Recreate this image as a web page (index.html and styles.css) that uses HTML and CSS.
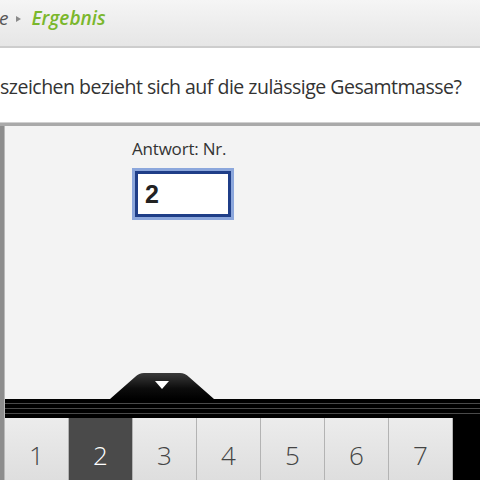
FILE: index.html
```html
<!doctype html>
<html>
  <head>
    <meta charset="UTF-8" />
    <title>Ergebnis</title>
    <link rel="stylesheet" href="styles.css">
  </head>
  <body>
    <div id="header">
      <span class="crumb">e</span>
      <span class="crumb-sep"></span>
      <span class="crumb-current">Ergebnis</span>
    </div>
    <div id="question">szeichen bezieht sich auf die zulässige Gesamtmasse?</div>
    <div id="main">
      <div class="side"></div>
      <div class="column">
        <div class="answer">
          <div class="label">Antwort: Nr.</div>
          <div class="input">2</div>
        </div>
        <div class="handle-row">
          <svg class="handle" width="104" height="26" viewBox="0 0 104 26">
            <defs>
              <linearGradient id="hg" x1="0" y1="0" x2="0" y2="1">
                <stop offset="0" stop-color="#3a3a3a" />
                <stop offset="0.6" stop-color="#0c0c0c" />
                <stop offset="1" stop-color="#000" />
              </linearGradient>
            </defs>
            <path d="M0 26 L25 4 Q29 0 34 0 L70 0 Q75 0 79 4 L104 26 Z" fill="url(#hg)" />
            <path d="M45 8 L59 8 L52 16 Z" fill="#fff" />
          </svg>
        </div>
        <div class="band"></div>
        <div id="tabs">
          <div class="tab">1</div>
          <div class="tab active">2</div>
          <div class="tab">3</div>
          <div class="tab">4</div>
          <div class="tab">5</div>
          <div class="tab">6</div>
          <div class="tab">7</div>
        </div>
      </div>
    </div>
  </body>
</html>
```

FILE: styles.css
```css
* {
  padding: 0px;
  margin: 0px;
  box-sizing: border-box;
}
html,
body {
  width: 480px;
  height: 480px;
  overflow: hidden;
}
body {
  font-family: "Open Sans", "Noto Sans", sans-serif;
  color: #333;
  display: flex;
  flex-direction: column;
  background: #f3f3f3;
}
#header {
  height: 48px;
  flex: none;
  background: linear-gradient(to bottom, #f5f5f5, #e6e6e6);
  border-bottom: 2px solid #cdcdcd;
  display: flex;
  align-items: center;
  padding-bottom: 10px;
  white-space: nowrap;
}
.crumb {
  font-style: italic;
  font-size: 19px;
  color: #555;
  margin-left: -1px;
}
.crumb-sep {
  width: 0;
  height: 0;
  border-top: 3.5px solid transparent;
  border-bottom: 3.5px solid transparent;
  border-left: 5px solid #8a8a8a;
  margin: 2px 10px 0 8px;
}
.crumb-current {
  font-style: italic;
  font-weight: 600;
  font-size: 19px;
  color: #7ab72c;
}
#question {
  height: 78px;
  flex: none;
  background: #fff;
  border-bottom: 3px solid #a9a9a9;
  box-shadow: inset 0 -1px 0 #d0d0d0;
  font-size: 19.5px;
  letter-spacing: -0.5px;
  white-space: nowrap;
  padding-top: 25px;
  color: #333;
}
#main {
  flex: 1;
  display: flex;
  min-height: 0;
}
.side {
  width: 5px;
  flex: none;
  background: #8d8d8d;
  border-right: 1px solid #b9b9b9;
}
.column {
  flex: 1;
  display: flex;
  flex-direction: column;
  background: #f3f3f3;
}
.answer {
  flex: 1;
  padding: 11px 0 0 127px;
}
.label {
  font-size: 17px;
  letter-spacing: -0.2px;
  line-height: 24px;
  color: #333;
}
.input {
  width: 96px;
  height: 46px;
  margin-top: 10px;
  margin-left: 3px;
  border: 3px solid #1f3e88;
  box-shadow: 0 0 0 3px #8ca7dc;
  background: #fff;
  font-family: "Liberation Sans", Arial, sans-serif;
  font-weight: bold;
  font-size: 25px;
  line-height: 40px;
  padding-left: 7px;
  color: #222;
}
.handle-row {
  height: 26px;
  flex: none;
  padding-left: 105px;
}
.handle {
  display: block;
}
.band {
  height: 19px;
  flex: none;
  background: linear-gradient(
    to bottom,
    #000 0 4px,
    #4a4a4a 4px 5.5px,
    #000 5.5px 9px,
    #4a4a4a 9px 10.5px,
    #000 10.5px 14px,
    #4a4a4a 14px 15.5px,
    #000 15.5px
  );
}
#tabs {
  height: 62px;
  flex: none;
  background: #000;
  display: flex;
}
.tab {
  width: 64px;
  flex: none;
  background: linear-gradient(to bottom, #ececec, #dedede);
  border-right: 1px solid #b3b3b3;
  font-size: 26px;
  font-weight: 300;
  color: #444;
  text-align: center;
  padding-top: 20px;
  line-height: 34px;
}
.tab.active {
  background: #4a4a4a;
  color: #fff;
}
```
